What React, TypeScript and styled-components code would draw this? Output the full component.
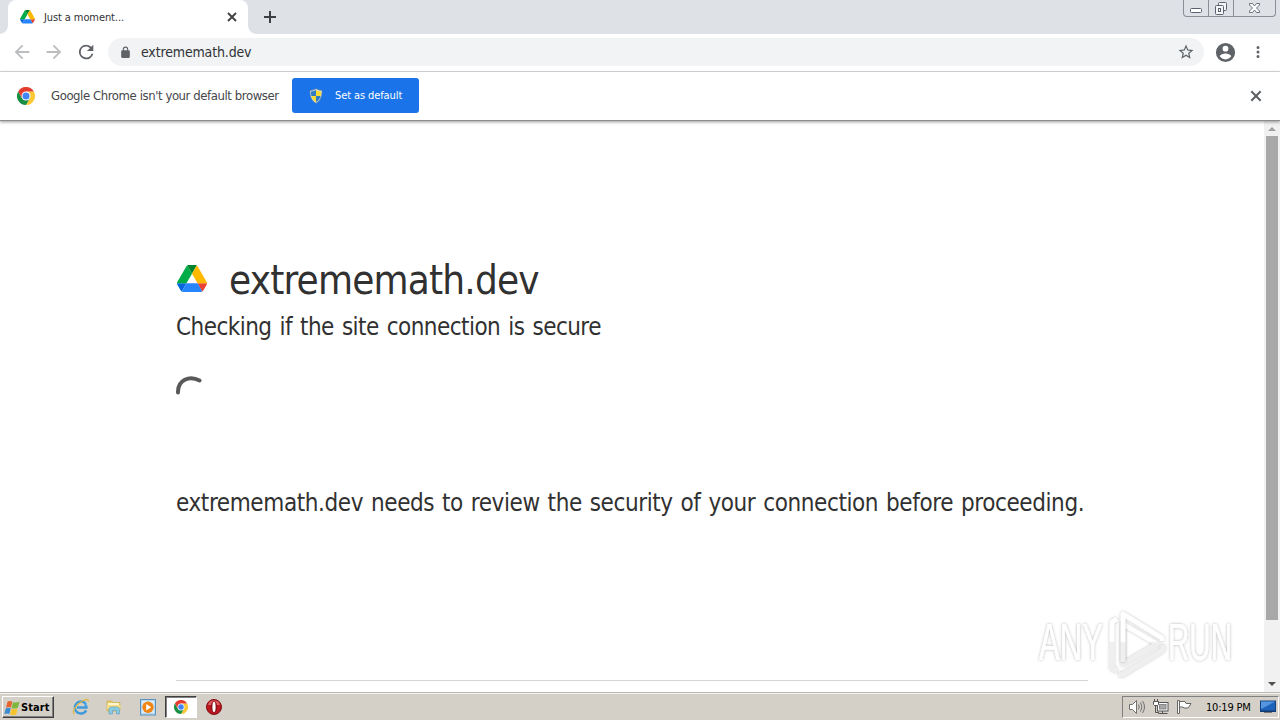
import React from "react";
import styled, { createGlobalStyle, css } from "styled-components";

const GlobalStyle = createGlobalStyle`
  * { box-sizing: border-box; }
  body {
    margin: 0;
    overflow: hidden;
    background: #fff;
    font-family: "DejaVu Sans Condensed", "DejaVu Sans", sans-serif;
    font-stretch: condensed;
  }
  svg { display: block; flex: none; }
`;

const Screen = styled.div`
  position: relative;
  width: 1280px;
  height: 720px;
  display: flex;
  flex-direction: column;
  overflow: hidden;
`;

const Label = styled.span<{ $size: number; $spacing?: number; $word?: number; $color?: string }>`
  font-size: ${p => p.$size}px;
  letter-spacing: ${p => p.$spacing || 0}px;
  word-spacing: ${p => p.$word || 0}px;
  color: ${p => p.$color || "#303236"};
  white-space: nowrap;
  line-height: 1.2;
`;

const TabStrip = styled.div`
  height: 34px;
  flex: none;
  display: flex;
  align-items: flex-start;
  background: #dee1e6;
  padding-left: 8px;
`;

const Tab = styled.div`
  position: relative;
  width: 240px;
  height: 34px;
  display: flex;
  align-items: center;
  padding: 0 10px 0 12px;
  background: #fff;
  border-radius: 8px 8px 0 0;

  &::before, &::after {
    content: "";
    position: absolute;
    bottom: 0;
    width: 8px;
    height: 8px;
  }
  &::before {
    left: -8px;
    background: radial-gradient(circle at 0 0, transparent 7.5px, #fff 8px);
  }
  &::after {
    right: -8px;
    background: radial-gradient(circle at 100% 0, transparent 7.5px, #fff 8px);
  }
`;

const TabTitle = styled(Label)`
  flex: 1;
  margin-left: 9px;
  padding-top: 1px;
`;

const NewTab = styled.div`
  margin: 10px 0 0 15px;
`;

const WindowButtons = styled.div`
  display: flex;
  margin: 0 4px 0 auto;
  height: 17px;
  border: 1px solid #8b8e95;
  border-top: 0;
  border-radius: 0 0 4px 4px;
`;

const WindowButton = styled.div<{ $width: number }>`
  width: ${p => p.$width}px;
  display: flex;
  justify-content: center;
  & + & { border-left: 1px solid #8b8e95; }
`;

const Toolbar = styled.div`
  height: 38px;
  flex: none;
  display: flex;
  align-items: center;
  padding: 0 11px 1px;
  border-bottom: 1px solid #dadce0;
`;

const NavButtons = styled.div`
  display: flex;
  gap: 10px;
  width: 97px;
`;

const AddressBar = styled.div`
  width: 1096px;
  height: 28px;
  display: flex;
  align-items: center;
  padding: 0 9px 0 11px;
  border-radius: 14px;
  background: #f1f3f4;
`;

const Address = styled(Label)`
  flex: 1;
  margin-left: 9px;
`;

const ToolbarEnd = styled.div`
  display: flex;
  align-items: center;
  gap: 12px;
  margin-left: 10px;
`;

const InfoBar = styled.div`
  position: relative;
  z-index: 1;
  height: 49px;
  flex: none;
  display: flex;
  align-items: center;
  padding: 0 17px;
  background: #fff;
  border-bottom: 1px solid #8d8d8d;
  box-shadow: 0 1px 3px rgba(0, 0, 0, 0.4);
`;

const InfoText = styled(Label)`
  width: 241px;
  margin-left: 16px;
`;

const DefaultButton = styled.button`
  width: 127px;
  height: 35px;
  display: flex;
  align-items: center;
  gap: 11px;
  margin: 0 auto 2px 0;
  padding: 1px 0 0 16px;
  border: 0;
  border-radius: 3px;
  background: #1a73e8;
  font-family: inherit;
  font-stretch: inherit;
`;

const Viewport = styled.div`
  height: 571px;
  flex: none;
  display: flex;
`;

const Page = styled.main`
  flex: 1;
  min-width: 0;
  display: flex;
  flex-direction: column;
  align-items: flex-start;
  padding: 135px 176px 0;
`;

const Heading = styled.div`
  height: 48px;
  display: flex;
  align-items: center;
  gap: 22px;
  padding-left: 1px;
  svg { margin-bottom: 4px; }
`;

const Subtitle = styled.div`
  margin-top: 9px;
  height: 30px;
`;

const Spinner = styled.div`
  margin: 31px 0 0 -1px;
  height: 32px;
`;

const Notice = styled.div`
  margin-top: 83px;
  height: 30px;
`;

const Divider = styled.div`
  width: 912px;
  margin-top: 161px;
  border-top: 1px solid #d5d5d5;
`;

const ScrollBar = styled.div`
  width: 16px;
  flex: none;
  display: flex;
  flex-direction: column;
  align-items: center;
  background: #f1f1f1;
`;

const ScrollArrow = styled.div<{ $down?: boolean }>`
  height: 15px;
  padding-top: ${p => (p.$down ? 5 : 6)}px;
  ${p => p.$down && css`margin-top: auto;`}
`;

const ScrollThumb = styled.div`
  width: 12px;
  height: 484px;
  background: #a8a8a8;
`;

const TaskBar = styled.div`
  height: 28px;
  flex: none;
  display: flex;
  align-items: center;
  padding: 1px 1px 0 2px;
  background: #d4d0c8;
  border-top: 1px solid #bdb9b0;
  box-shadow: inset 0 1px 0 #f5f4f1;
`;

const StartButton = styled.div`
  width: 52px;
  height: 22px;
  display: flex;
  align-items: center;
  gap: 1px;
  padding: 1px 0 0 1px;
  border: 1px solid;
  border-color: #fff #404040 #404040 #fff;
  box-shadow: inset -1px -1px 0 #808080;
`;

const StartLabel = styled(Label)`
  font-weight: bold;
`;

const QuickLaunch = styled.div`
  display: flex;
  align-items: center;
  margin-left: 10px;
`;

const LaunchItem = styled.div<{ $active?: boolean }>`
  width: ${p => (p.$active ? 32 : 33.6)}px;
  height: 22px;
  display: flex;
  align-items: center;
  justify-content: center;
  ${p => p.$active && css`
    background: #fff;
    border: 1px solid;
    border-color: #404040 #fff #fff #404040;
    box-shadow: inset 1px 1px 0 #808080;
  `}
`;

const Tray = styled.div`
  width: 157px;
  height: 22px;
  display: flex;
  align-items: center;
  gap: 7px;
  margin-left: auto;
  padding-left: 5px;
  border: 1px solid;
  border-color: #808080 #fff #fff #808080;
`;

const Clock = styled(Label)`
  width: 47px;
  margin-left: 6px;
  padding-top: 1px;
`;

const Watermark = styled.div`
  position: absolute;
  left: 1030px;
  top: 603px;
`;

const DriveIcon: React.FC<{ width: number }> = ({ width }) => (
  <svg width={width} height={width * 0.9} viewBox="0 0 87.3 78">
    <path d="M6.6 66.85l3.85 6.65c.8 1.4 1.95 2.5 3.3 3.3L27.5 53H0c0 1.55.4 3.1 1.2 4.5z" fill="#0066da" />
    <path d="M43.65 25L29.9 1.2c-1.35.8-2.5 1.9-3.3 3.3L1.2 48.5A9.06 9.06 0 000 53h27.5z" fill="#00ac47" />
    <path d="M73.55 76.8c1.35-.8 2.5-1.9 3.3-3.3l1.6-2.75 7.65-13.25c.8-1.4 1.2-2.95 1.2-4.5H59.8l5.85 11.5z" fill="#ea4335" />
    <path d="M43.65 25L57.4 1.2C56.05.4 54.5 0 52.9 0H34.4c-1.6 0-3.15.45-4.5 1.2z" fill="#00832d" />
    <path d="M59.8 53H27.5L13.75 76.8c1.35.8 2.9 1.2 4.5 1.2h50.8c1.6 0 3.15-.45 4.5-1.2z" fill="#2684fc" />
    <path d="M73.4 26.5L60.7 4.5c-.8-1.4-1.95-2.5-3.3-3.3L43.65 25 59.8 53h27.45c0-1.55-.4-3.1-1.2-4.5z" fill="#ffba00" />
  </svg>
);

const ChromeIcon: React.FC<{ size: number }> = ({ size }) => (
  <svg width={size} height={size} viewBox="0 0 48 48">
    <path d="M44.8 12A24 24 0 0124 48L34.4 30 24 12z" fill="#fcc934" />
    <path d="M3.2 12A24 24 0 0024 48L34.4 30H13.6z" fill="#188f43" />
    <path d="M24 12h20.8A24 24 0 003.2 12l10.4 18z" fill="#e33b2e" />
    <circle cx="24" cy="24" r="12" fill="#fff" />
    <circle cx="24" cy="24" r="9.4" fill="#4285f4" />
  </svg>
);

const CrossIcon: React.FC<{ size: number; color: string }> = ({ size, color }) => (
  <svg width={size} height={size} viewBox="0 0 12 12">
    <path d="M2 2l8 8M10 2l-8 8" stroke={color} strokeWidth="1.8" />
  </svg>
);

const MaterialIcon: React.FC<{ d: string; size: number; color?: string }> = ({ d, size, color = "#5f6368" }) => (
  <svg width={size} height={size} viewBox="0 0 24 24">
    <path d={d} fill={color} />
  </svg>
);

const ICONS = {
  back: "M20 11H7.83l5.59-5.59L12 4l-8 8 8 8 1.41-1.41L7.83 13H20v-2z",
  forward: "M12 4l-1.41 1.41L16.17 11H4v2h12.17l-5.58 5.59L12 20l8-8z",
  reload: "M17.65 6.35A7.96 7.96 0 0012 4a8 8 0 108 10h-2.08A6 6 0 1112 6c1.66 0 3.14.69 4.22 1.78L13 11h7V4z",
  lock: "M18 8h-1V6A5 5 0 007 6v2H6a2 2 0 00-2 2v10c0 1.1.9 2 2 2h12a2 2 0 002-2V10a2 2 0 00-2-2zm-3 0H9V6a3 3 0 016 0z",
  star: "M22 9.24l-7.19-.62L12 2 9.19 8.63 2 9.24l5.46 4.73L5.82 21 12 17.27 18.18 21l-1.63-7.03zM12 15.4l-3.76 2.27 1-4.28-3.32-2.88 4.38-.38L12 6.1l1.71 4.04 4.38.38-3.32 2.88 1 4.28z",
  person: "M12 2a10 10 0 100 20 10 10 0 000-20zm0 3a3 3 0 110 6 3 3 0 010-6zm0 14.2A7.2 7.2 0 016 16c.03-1.99 4-3.08 6-3.08s5.97 1.09 6 3.08a7.2 7.2 0 01-6 3.2z",
  more: "M12 8a2 2 0 100-4 2 2 0 000 4zm0 2a2 2 0 100 4 2 2 0 000-4zm0 6a2 2 0 100 4 2 2 0 000-4z",
};

const ShieldIcon = () => (
  <svg width="16" height="16" viewBox="0 0 16 16">
    <path d="M8 .8c2 1.2 4 1.7 6 1.7 0 6-1.4 10-6 12.7C3.4 12.5 2 8.5 2 2.5 4 2.5 6 2 8 .8z" fill="#e4edf1" stroke="#6c8796" strokeWidth=".7" />
    <path d="M8 2v6H3.3C3 6.5 3 5 3 3.5 5 3.4 6.5 2.8 8 2z" fill="#2f7cc2" />
    <path d="M8 2v6h4.7C13 6.5 13 5 13 3.5 11 3.4 9.5 2.8 8 2z" fill="#f7d935" />
    <path d="M8 14V8H3.3c.7 2.7 2.2 4.7 4.7 6z" fill="#f7d935" />
    <path d="M8 14V8h4.7c-.7 2.7-2.2 4.7-4.7 6z" fill="#2f7cc2" />
  </svg>
);

const MinimizeGlyph = () => (
  <svg width="24" height="16">
    <rect x="6.5" y="8.5" width="11" height="4" rx="1" fill="#fff" stroke="#5d6270" />
  </svg>
);

const RestoreGlyph = () => (
  <svg width="24" height="16" fill="#f4f5f7" stroke="#5d6270">
    <rect x="9.5" y="2.5" width="8" height="8" rx="1" />
    <rect x="6.5" y="5.5" width="8" height="9" rx="1" />
    <rect x="9.5" y="8.5" width="2" height="3" />
  </svg>
);

const CloseGlyph = () => (
  <svg width="24" height="16">
    <path d="M6.5 3.5h3l2 2.5 2-2.5h3v1.5l-3 3 3 3v1.5h-3l-2-2.5-2 2.5h-3V11l3-3-3-3z" fill="#fff" stroke="#5d6270" strokeWidth=".9" />
  </svg>
);

const WindowsFlag = () => (
  <svg width="16" height="16" viewBox="0 0 16 16">
    <path d="M3.5 1.8C5 .6 6.8.8 8.3 1.6L7 7.5C5.4 6.8 3.7 6.8 2 7.7z" fill="#e8642d" />
    <path d="M9 2c1.8.9 4.3.8 6.5-.5L14 7.5c-1.7 1.2-4.3 1.3-6.3.4z" fill="#7db73b" />
    <path d="M1.7 8.4c1.7-.9 3.4-.9 5-.2L5.4 14c-1.6-.8-3.3-.8-5 .1z" fill="#3a8bd0" />
    <path d="M7.5 8.6c1.8.9 4.3.8 6.2-.3L12.3 14.2c-1.8 1.2-4.3 1.2-6.2.3z" fill="#f5c32e" />
  </svg>
);

const ExplorerIcon = () => (
  <svg width="18" height="18" viewBox="0 0 18 18" fill="none">
    <path d="M14.2 12.3A6 6 0 119 3.5c3.3 0 5.3 2.4 5.4 6H5" stroke="#3d9bdc" strokeWidth="2.5" />
    <path d="M14.7 7.5c.1-1.5-.3-2.5-1-3.2" stroke="#86caf0" strokeWidth="1" />
    <path d="M2.5 15.8C-1 14.5 4 6.5 10.5 3c4-2.1 6-2 6 .5" stroke="#e4b63b" strokeWidth="1.3" />
  </svg>
);

const FolderIcon = () => (
  <svg width="18" height="18" viewBox="0 0 18 18">
    <path d="M2 3h5l1 1.5h7V13H2z" fill="#e8ca68" stroke="#c9a947" strokeWidth=".6" />
    <path d="M3 5h11v3H3z" fill="#fff6cb" />
    <path d="M2 7h13.5v4H2z" fill="#f6dc82" />
    <path d="M4 16v-4.5c0-1.7 1-2.5 2.5-2.5h5c2 0 3 1 3 2.7V16h-3v-3.5h-4V16z" fill="#8bcbe5" stroke="#579eb9" strokeWidth=".6" />
  </svg>
);

const PlayerIcon = () => (
  <svg width="16" height="17" viewBox="0 0 16 17">
    <rect x=".5" y=".5" width="15" height="15.5" fill="#b5d7f0" stroke="#5b91bd" />
    <rect x="2" y="2" width="12" height="12" fill="#d9ecf7" />
    <circle cx="8" cy="8.3" r="5.7" fill="#ef8417" />
    <path d="M6.2 5v6.6l5-3.3z" fill="#fff" />
  </svg>
);

const OperaIcon = () => (
  <svg width="16" height="16" viewBox="0 0 16 16">
    <circle cx="8" cy="8" r="7.5" fill="#bd1720" stroke="#7e1014" />
    <path d="M2 6a6.3 6.3 0 0112 0z" fill="#df6464" />
    <ellipse cx="8" cy="8" rx="3.2" ry="6" fill="#8c1218" />
    <ellipse cx="8" cy="8" rx="1.6" ry="5.2" fill="#fff" />
  </svg>
);

const SpeakerIcon = () => (
  <svg width="18" height="16" viewBox="0 0 18 16" fill="none" stroke="#707070">
    <path d="M1.5 5.5h3l4-4v13l-4-4h-3z" fill="#fff" />
    <path d="M10.5 5.5q1.5 2.5 0 5M12.5 3.5q3 4.5 0 9M14.5 2q4 6 0 12" />
  </svg>
);

const NetworkIcon = () => (
  <svg width="16" height="16" viewBox="0 0 16 16" stroke="#555">
    <rect x="4.5" y="3.5" width="10.5" height="8.5" fill="#fff" />
    <rect x="6.5" y="5.5" width="6.5" height="4.5" fill="#a6a6a6" stroke="#888" />
    <path d="M9.5 12v2M5.5 14.5h9M2.5 6v7.5H6" fill="none" />
    <path d="M.5 2.5h5v3l-1 1h-3l-1-1zM1.5 0v2.5M4.5 0v2.5" fill="#fff" />
  </svg>
);

const FlagIcon = () => (
  <svg width="17" height="16" viewBox="0 0 17 16" fill="#fff" stroke="#666">
    <path d="M3.5 2.5h5.5l1 2h5l-1.5 2.5L12 9H8L7 8H3.5z" />
    <path d="M1.5 1.5h2v13h-2z" />
  </svg>
);

const DesktopIcon = () => (
  <svg width="16" height="14" viewBox="0 0 16 14">
    <rect x=".5" y="1" width="15" height="10.5" fill="#1d62bb" stroke="#12437f" />
    <path d="M1 1.5h14L3 8 1 9z" fill="#5596df" />
    <path d="M1 10.5h14v1H1z" fill="#123660" />
    <path d="M4 12.5h8" stroke="#777" />
  </svg>
);

const Logo = () => (
  <svg width="220" height="80" viewBox="0 0 220 80">
    <defs>
      <linearGradient id="wm" gradientUnits="userSpaceOnUse" x1="0" y1="0" x2="0" y2="78">
        <stop offset=".49" stopColor="#fff" />
        <stop offset=".51" stopColor="#efefef" />
      </linearGradient>
      <filter id="wm-shadow" filterUnits="userSpaceOnUse" x="0" y="0" width="220" height="80">
        <feDropShadow dx="0" dy="0" stdDeviation="1.6" floodColor="#000" floodOpacity=".3" />
      </filter>
    </defs>
    <g filter="url(#wm-shadow)" fill="url(#wm)" fontFamily="Liberation Sans, sans-serif" fontSize="51">
      <text transform="translate(9 57) scale(.61 1)">ANY</text>
      <text transform="translate(138 57) scale(.58 1)">RUN</text>
    </g>
    <g fill="none" stroke="url(#wm)" strokeWidth="4.5" strokeLinejoin="round">
      <path d="M87 16l-5 3v46l5 3" filter="url(#wm-shadow)" />
      <path d="M89 71l3 1 41-25v-5" filter="url(#wm-shadow)" />
      <path d="M93 21l34 20-34 20z" filter="url(#wm-shadow)" />
      <path d="M93 59V11l39 24v3" filter="url(#wm-shadow)" />
    </g>
  </svg>
);

export default function App() {
  return (
    <Screen>
      <GlobalStyle />
      <TabStrip>
        <Tab>
          <DriveIcon width={15} />
          <TabTitle $size={11} $spacing={-0.1}>Just a moment...</TabTitle>
          <CrossIcon size={12} color="#3c4043" />
        </Tab>
        <NewTab>
          <svg width="14" height="14">
            <path d="M7 1v12M1 7h12" stroke="#3c4043" strokeWidth="2" />
          </svg>
        </NewTab>
        <WindowButtons>
          <WindowButton $width={24}><MinimizeGlyph /></WindowButton>
          <WindowButton $width={25}><RestoreGlyph /></WindowButton>
          <WindowButton $width={42}><CloseGlyph /></WindowButton>
        </WindowButtons>
      </TabStrip>

      <Toolbar>
        <NavButtons>
          <MaterialIcon d={ICONS.back} size={22} color="#bbbdbf" />
          <MaterialIcon d={ICONS.forward} size={22} color="#bbbdbf" />
          <MaterialIcon d={ICONS.reload} size={22} />
        </NavButtons>
        <AddressBar>
          <MaterialIcon d={ICONS.lock} size={13} />
          <Address $size={14} $spacing={-0.15}>extrememath.dev</Address>
          <MaterialIcon d={ICONS.star} size={18} />
        </AddressBar>
        <ToolbarEnd>
          <MaterialIcon d={ICONS.person} size={23} />
          <MaterialIcon d={ICONS.more} size={18} />
        </ToolbarEnd>
      </Toolbar>

      <InfoBar>
        <ChromeIcon size={18} />
        <InfoText $size={13} $spacing={-0.42} $color="#45474b">Google Chrome isn't your default browser</InfoText>
        <DefaultButton>
          <ShieldIcon />
          <Label $size={11} $spacing={-0.1} $color="#fff">Set as default</Label>
        </DefaultButton>
        <CrossIcon size={14} color="#5f6368" />
      </InfoBar>

      <Viewport>
        <Page>
          <Heading>
            <DriveIcon width={30} />
            <Label $size={40} $spacing={-0.8} $color="#313131">extrememath.dev</Label>
          </Heading>
          <Subtitle>
            <Label $size={24} $spacing={-0.55} $word={1.75} $color="#313131">Checking if the site connection is secure</Label>
          </Subtitle>
          <Spinner>
            <svg width="32" height="32" viewBox="0 0 32 32">
              <path d="M3 18.5C2.5 6 14.5 1 24.5 6.5" fill="none" stroke="#595959" strokeWidth="4" strokeLinecap="round" />
            </svg>
          </Spinner>
          <Notice>
            <Label $size={24} $spacing={-0.4} $word={1.4} $color="#313131">
              extrememath.dev needs to review the security of your connection before proceeding.
            </Label>
          </Notice>
          <Divider />
        </Page>
        <ScrollBar>
          <ScrollArrow>
            <svg width="8" height="4"><path d="M0 4l4-4 4 4z" fill="#a0a0a0" /></svg>
          </ScrollArrow>
          <ScrollThumb />
          <ScrollArrow $down>
            <svg width="8" height="4"><path d="M0 0l4 4 4-4z" fill="#505050" /></svg>
          </ScrollArrow>
        </ScrollBar>
      </Viewport>

      <TaskBar>
        <StartButton>
          <WindowsFlag />
          <StartLabel $size={11} $spacing={0.1} $color="#000">Start</StartLabel>
        </StartButton>
        <QuickLaunch>
          <LaunchItem><ExplorerIcon /></LaunchItem>
          <LaunchItem><FolderIcon /></LaunchItem>
          <LaunchItem><PlayerIcon /></LaunchItem>
          <LaunchItem $active><ChromeIcon size={14} /></LaunchItem>
          <LaunchItem><OperaIcon /></LaunchItem>
        </QuickLaunch>
        <Tray>
          <SpeakerIcon />
          <NetworkIcon />
          <FlagIcon />
          <Clock $size={11} $spacing={-0.2} $color="#000">10:19 PM</Clock>
          <DesktopIcon />
        </Tray>
      </TaskBar>

      <Watermark>
        <Logo />
      </Watermark>
    </Screen>
  );
}
